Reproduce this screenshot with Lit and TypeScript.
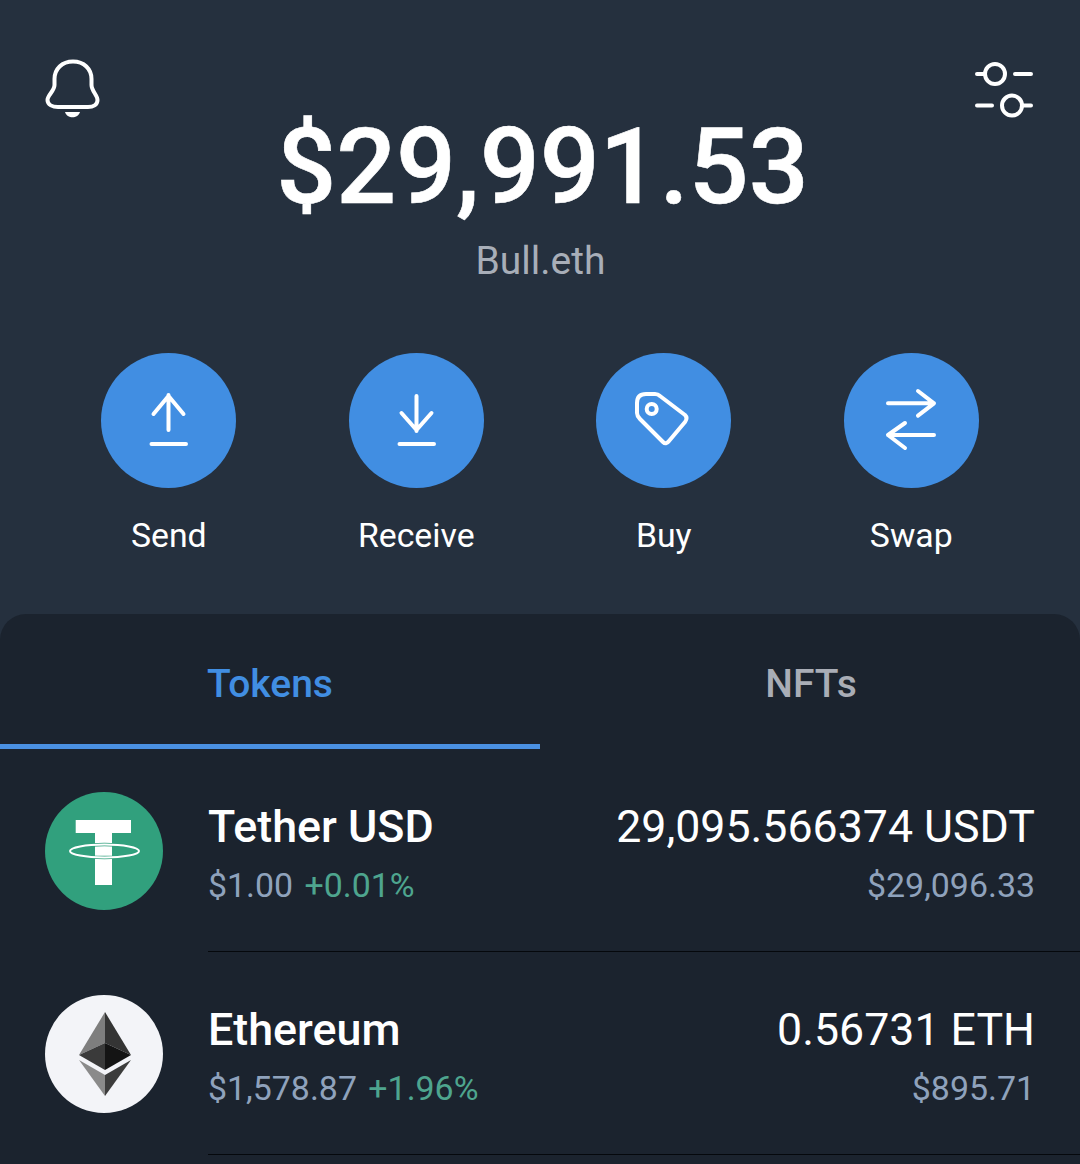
import { LitElement, html, css, svg } from "lit";
import { customElement } from "lit/decorators.js";

const bell = html`<svg class="bell" width="56" height="60" viewBox="45 59 56 60" fill="none" stroke="#fff" stroke-width="4" stroke-linejoin="round">
  <path d="M73 61.5C62 61.5 54.5 69 54.5 79V85C54.5 91 47.5 95 47.5 100C47.5 105 53 107 58 107H88C93 107 97.5 105 97.5 100C97.5 95 91.5 91 91.5 85V79C91.5 69 84 61.5 73 61.5Z"/>
  <path d="M65 112H80C78 119 67 119 65 112Z" fill="#fff" stroke="none"/>
</svg>`;

const sliders = html`<svg class="sliders" width="60" height="60" viewBox="974 62 60 60" fill="none" stroke="#fff" stroke-width="4" stroke-linecap="round">
  <circle cx="995" cy="74" r="10"/><circle cx="1012" cy="105.6" r="10"/>
  <path d="M977 74H985M1015 74H1031M977 105.6H992M1022 105.6H1031"/>
</svg>`;

const icons = {
  send: svg`<path d="M67.5 77V42M52.5 61L67.5 43L82.5 61M50.5 91H85"/>`,
  receive: svg`<path d="M67.5 43V78M52.5 60L67.5 77L82.5 60M50.5 91H85"/>`,
  buy: svg`<path d="M50 41H59Q62 41 64 43L89 62Q92 65 89 69L73 88Q70 92 67 89L44 66Q41 63 41 60V50Q41 41 50 41Z"/><circle cx="55.7" cy="56" r="5"/>`,
  swap: svg`<path d="M44 50.3H90M74 38L90 50.3L74 62.7M90 82H44M61 70L44 82L61 95"/>`,
};

const tether = html`<svg width="118" height="118" viewBox="0 0 118 118">
  <circle cx="59" cy="59" r="59" fill="#31a07d"/>
  <path d="M30.7 28H86V41H67V93H50V41H30.7Z" fill="#fff"/>
  <ellipse cx="59.5" cy="59" rx="34.5" ry="6.5" fill="none" stroke="#31a07d" stroke-width="3.4"/>
  <ellipse cx="59.5" cy="59" rx="34.5" ry="6.5" fill="none" stroke="#fff" stroke-width="2"/>
</svg>`;

const eth = html`<svg width="118" height="118" viewBox="0 0 118 118">
  <circle cx="59" cy="59" r="59" fill="#f3f4f8"/>
  <path d="M60 17L34 60L60 48Z" fill="#7e7e7e"/>
  <path d="M60 17L86 60L60 48Z" fill="#343434"/>
  <path d="M34 60L60 75V48Z" fill="#3a3a3a"/>
  <path d="M86 60L60 75V48Z" fill="#141414"/>
  <path d="M34 65L60 80V101Z" fill="#8a8a8a"/>
  <path d="M86 65L60 80V101Z" fill="#3c3c3c"/>
</svg>`;

const actions = [
  { label: "Send", icon: icons.send },
  { label: "Receive", icon: icons.receive },
  { label: "Buy", icon: icons.buy },
  { label: "Swap", icon: icons.swap },
];

const tokens = [
  { name: "Tether USD", price: "$1.00", change: "+0.01%", amount: "29,095.566374 USDT", value: "$29,096.33", logo: tether },
  { name: "Ethereum", price: "$1,578.87", change: "+1.96%", amount: "0.56731 ETH", value: "$895.71", logo: eth },
];

@customElement("app-root")
export class AppRoot extends LitElement {
  static styles = css`
    :host {
      display: block;
      width: 1080px;
      height: 1164px;
      overflow: hidden;
      background: #25303e;
      font-family: Roboto, "Liberation Sans", sans-serif;
      color: #fff;
    }
    .top {
      display: grid;
      grid-template-columns: 1fr auto 1fr;
      align-content: start;
      padding: 59px 46px 0 45px;
      height: 614px;
      box-sizing: border-box;
    }
    .bell { justify-self: start; }
    .sliders { justify-self: end; margin: 3px 0 0 0; }
    .balance {
      display: flex;
      flex-direction: column;
      align-items: center;
      margin-left: 2px;
    }
    .amount {
      font-size: 105.5px;
      font-weight: 500;
      line-height: 122px;
      margin-top: 47px;
      padding-left: 4px;
      white-space: nowrap;
      -webkit-text-stroke: 0.6px #fff;
    }
    .owner {
      font-size: 39px;
      line-height: 42px;
      color: #a8aeb8;
      margin-top: 12px;
    }
    .actions {
      grid-column: 1 / -1;
      display: grid;
      grid-template-columns: repeat(4, 1fr);
      margin: 71px -1px 0 0;
    }
    .action {
      display: flex;
      flex-direction: column;
      align-items: center;
      font-size: 33.8px;
      line-height: 38px;
    }
    .circle {
      width: 135px;
      height: 135px;
      border-radius: 50%;
      background: #418ee2;
      margin-bottom: 29px;
    }
    .circle svg {
      display: block;
      fill: none;
      stroke: #fff;
      stroke-width: 4;
      stroke-linecap: round;
      stroke-linejoin: round;
    }
    .panel {
      background: #1b232e;
      border-radius: 26px 26px 0 0;
      height: 550px;
    }
    .tabs {
      display: grid;
      grid-template-columns: 1fr 1fr;
      height: 135px;
    }
    .tab {
      display: flex;
      justify-content: center;
      align-items: center;
      font-size: 39px;
      font-weight: 500;
      color: #a9adb6;
      padding: 9px 0 5px 2px;
      box-sizing: border-box;
    }
    .tab.active {
      color: #418ee2;
      border-bottom: 5px solid #4a90e2;
      padding: 9px 0 0;
    }
    .row {
      display: flex;
      align-items: center;
      height: 203px;
      padding-left: 45px;
    }
    .logo {
      flex: none;
      width: 118px;
      height: 118px;
      margin-right: 45px;
    }
    .logo svg { display: block; }
    .body {
      flex: 1;
      align-self: stretch;
      display: flex;
      justify-content: space-between;
      align-items: center;
      padding-right: 45px;
      border-bottom: 1px solid #05080c;
    }
    .col { display: flex; flex-direction: column; gap: 14px; margin-top: 8px; }
    .col.right { align-items: flex-end; }
    .name { font-size: 44.8px; font-weight: 500; line-height: 50px; }
    .qty { font-size: 44.7px; line-height: 50px; }
    .sub { font-size: 33.9px; line-height: 40px; color: #8fa2bc; }
    .up { color: #4ea58e; margin-left: 3px; }
  `;

  render() {
    return html`
      <section class="top">
        ${bell}
        <div class="balance">
          <div class="amount">$29,991.53</div>
          <div class="owner">Bull.eth</div>
        </div>
        ${sliders}
        <div class="actions">
          ${actions.map(
            (a) => html`<div class="action">
              <div class="circle"><svg width="135" height="135" viewBox="0 0 135 135">${a.icon}</svg></div>
              ${a.label}
            </div>`
          )}
        </div>
      </section>
      <section class="panel">
        <div class="tabs">
          <div class="tab active">Tokens</div>
          <div class="tab">NFTs</div>
        </div>
        ${tokens.map(
          (t) => html`<div class="row">
            <div class="logo">${t.logo}</div>
            <div class="body">
              <div class="col">
                <div class="name">${t.name}</div>
                <div class="sub">${t.price} <span class="up">${t.change}</span></div>
              </div>
              <div class="col right">
                <div class="qty">${t.amount}</div>
                <div class="sub">${t.value}</div>
              </div>
            </div>
          </div>`
        )}
      </section>
    `;
  }
}
